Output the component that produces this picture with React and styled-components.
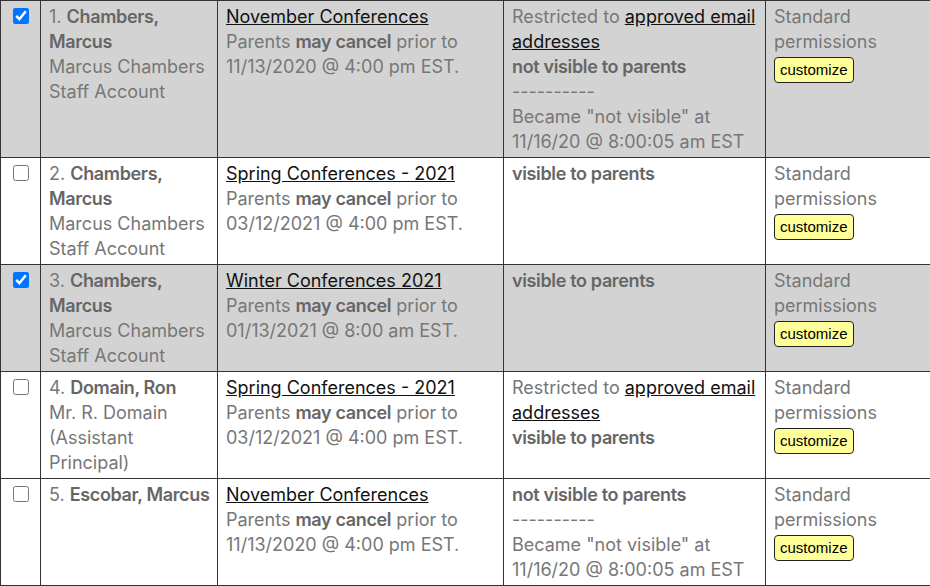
import React from "react";
import styled, { createGlobalStyle } from "styled-components";

const Global = createGlobalStyle`
  body {
    margin: 0;
    overflow: hidden;
    background: #fff;
    font-family: Inter, "Noto Sans", sans-serif;
  }
`;

const Table = styled("table")`
  border-collapse: collapse;
  table-layout: fixed;
  width: 936px;
  font-size: 18px;
  line-height: 25px;
  color: #777;
`;

const Row = styled("tr")`
  background: ${(p) => (p.selected ? "#d3d3d3" : "#fff")};
`;

const Cell = styled("td")`
  border: 1px solid #333;
  padding: 3px 5px 3px 8px;
  vertical-align: top;
`;

const CheckCell = styled(Cell)`
  padding: 3px 0;
`;

const Check = styled("input")`
  display: block;
  width: 16px;
  height: 16px;
  margin: 4px auto 0;
  accent-color: #0075ff;
`;

const Strong = styled("b")`
  font-weight: 600;
  letter-spacing: -0.35px;
  color: #666;
`;

const Link = styled("a")`
  color: #111;
  text-decoration: underline;
  cursor: pointer;
`;

const Customize = styled("button")`
  display: block;
  margin-top: 3px;
  padding: 3px 5px;
  background: #ffff99;
  border: 1px solid #222;
  border-radius: 4px;
  font-family: "Liberation Sans", Arial, sans-serif;
  font-size: 15px;
  line-height: 18px;
  color: #000;
`;

const rows = [
  {
    n: 1,
    name: "Chambers, Marcus",
    sub: ["Marcus Chambers", "Staff Account"],
    conf: "November Conferences",
    date: "11/13/2020 @ 4:00 pm EST.",
    restricted: true,
    visible: false,
    became: "11/16/20 @ 8:00:05 am EST",
    selected: true,
  },
  {
    n: 2,
    name: "Chambers, Marcus",
    sub: ["Marcus Chambers", "Staff Account"],
    conf: "Spring Conferences - 2021",
    date: "03/12/2021 @ 4:00 pm EST.",
    visible: true,
  },
  {
    n: 3,
    name: "Chambers, Marcus",
    sub: ["Marcus Chambers", "Staff Account"],
    conf: "Winter Conferences 2021",
    date: "01/13/2021 @ 8:00 am EST.",
    visible: true,
    selected: true,
  },
  {
    n: 4,
    name: "Domain, Ron",
    sub: ["Mr. R. Domain (Assistant Principal)"],
    conf: "Spring Conferences - 2021",
    date: "03/12/2021 @ 4:00 pm EST.",
    restricted: true,
    visible: true,
  },
  {
    n: 5,
    name: "Escobar, Marcus",
    sub: [],
    conf: "November Conferences",
    date: "11/13/2020 @ 4:00 pm EST.",
    visible: false,
    became: "11/16/20 @ 8:00:05 am EST",
  },
];

const App = () => {
  return (
    <>
      <Global />
      <Table>
        <colgroup>
          <col style={{ width: 40 }} />
          <col style={{ width: 177 }} />
          <col style={{ width: 286 }} />
          <col style={{ width: 262 }} />
          <col style={{ width: 171 }} />
        </colgroup>
        <tbody>
          {rows.map((r) => (
            <Row key={r.n} selected={r.selected}>
              <CheckCell>
                <Check type="checkbox" defaultChecked={!!r.selected} />
              </CheckCell>
              <Cell>
                {r.n}. <Strong>{r.name}</Strong>
                {r.sub.map((s) => (
                  <React.Fragment key={s}>
                    <br />
                    {s}
                  </React.Fragment>
                ))}
              </Cell>
              <Cell>
                <Link>{r.conf}</Link>
                <br />
                Parents <Strong>may cancel</Strong> prior to {r.date}
              </Cell>
              <Cell>
                {r.restricted && (
                  <>
                    Restricted to <Link>approved email addresses</Link>
                    <br />
                  </>
                )}
                <Strong>{r.visible ? "visible to parents" : "not visible to parents"}</Strong>
                {r.became && (
                  <>
                    <br />
                    ----------
                    <br />
                    Became "not visible" at {r.became}
                  </>
                )}
              </Cell>
              <Cell>
                Standard permissions
                <Customize type="button">customize</Customize>
              </Cell>
            </Row>
          ))}
        </tbody>
      </Table>
    </>
  );
};

export default App;
